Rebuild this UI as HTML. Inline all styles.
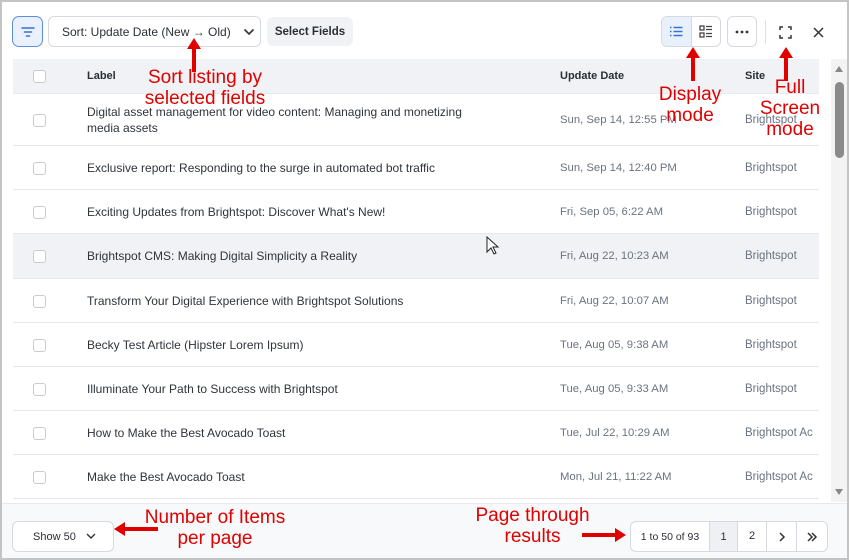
<!DOCTYPE html>
<html><head><style>
*{box-sizing:border-box;margin:0;padding:0}
body{width:849px;height:560px;overflow:hidden;background:#c4c4c4;font-family:"Liberation Sans",sans-serif;position:relative}
.win{position:absolute;left:2px;top:2px;width:845px;height:556px;background:#fff;overflow:hidden}
.btn{position:absolute;border:1px solid #d6dae0;border-radius:6px;background:#fff;font-size:12px;color:#2a2f36;display:flex;align-items:center;justify-content:center}
.tbl{position:absolute;left:11px;top:57px;width:806px}
.row{position:relative;border-bottom:1px solid #e6e8eb;height:44px;font-size:12px;color:#2f343b}
.row .cb{position:absolute;left:20px;top:50%;margin-top:-6px;width:13px;height:13px;border:1px solid #c8ccd2;border-radius:3px;background:#fff}
.row .l{position:absolute;left:74px;top:50%;transform:translateY(-50%);width:400px;line-height:16px}
.row .d{position:absolute;left:547px;top:50%;transform:translateY(-50%);color:#6b7280;font-size:11.3px}
.row .s{position:absolute;left:732px;top:50%;transform:translateY(-50%);color:#6b7280;white-space:nowrap;width:74px;overflow:hidden;font-size:11.5px}
.hd{background:#f0f2f5;height:35px;font-size:11px;color:#2a2f36;font-weight:bold}
.ann{position:absolute;color:#e00000;font-size:19px;text-align:center;line-height:21px}
</style></head><body>
<div class="win">
<div class="btn" style="left:10px;top:14px;width:31px;height:31px;border-color:#5b8de0;background:#eaf1fd;border-radius:7px">
<svg width="14" height="12"><path d="M1 2h12M3.5 6h7M5.5 10h3" stroke="#3b6fd0" stroke-width="1.6" stroke-linecap="round"/></svg></div>
<div class="btn" style="left:46px;top:14px;width:213px;height:31px;justify-content:flex-start;padding-left:13px">Sort: Update Date (New → Old)<svg style="margin-left:12px" width="12" height="8"><path d="M1.5 1.5l4.5 4.5 4.5-4.5" stroke="#333" stroke-width="1.6" fill="none"/></svg></div>
<div class="btn" style="left:265px;top:15px;width:86px;height:29px;border:none;background:#f0f2f5;font-weight:bold;font-size:11.5px">Select Fields</div>
<div class="btn" style="left:659px;top:14px;width:60px;height:31px;overflow:hidden">
<div style="width:30px;height:31px;background:#e8f0fc;border-right:1px solid #d6dae0;display:flex;align-items:center;justify-content:center"><svg width="14" height="11"><path d="M1 1.5h1.5M1 5.5h1.5M1 9.5h1.5M4.5 1.5h9M4.5 5.5h9M4.5 9.5h9" stroke="#3b6fd0" stroke-width="1.5"/></svg></div>
<div style="width:29px;display:flex;justify-content:center"><svg width="14" height="13"><rect x="1" y="1" width="4" height="4" fill="none" stroke="#444" stroke-width="1.3"/><rect x="1" y="8" width="4" height="4" fill="none" stroke="#444" stroke-width="1.3"/><path d="M7 1.5h6M7 4.5h6M7 8.5h6M7 11.5h6" stroke="#444" stroke-width="1.3"/></svg></div></div>
<div class="btn" style="left:725px;top:14px;width:30px;height:31px"><svg width="14" height="4"><circle cx="2" cy="2" r="1.4" fill="#333"/><circle cx="7" cy="2" r="1.4" fill="#333"/><circle cx="12" cy="2" r="1.4" fill="#333"/></svg></div>
<div style="position:absolute;left:763px;top:18px;width:1px;height:24px;background:#e0e3e7"></div>
<div class="btn" style="left:769px;top:16px;width:28px;height:28px;border:none"><svg width="13" height="13"><path d="M1 4V1h3M9 1h3v3M12 9v3H9M4 12H1V9" stroke="#333" stroke-width="1.5" fill="none"/></svg></div>
<div class="btn" style="left:802px;top:16px;width:28px;height:28px;border:none"><svg width="11" height="11"><path d="M1 1l9 9M10 1l-9 9" stroke="#333" stroke-width="1.5"/></svg></div>

<div class="tbl">
<div class="row hd"><div class="cb" style="top:17px"></div><div class="l" style="top:17px">Label</div><div class="d" style="color:#2a2f36;top:17px;font-size:11px">Update Date</div><div class="s" style="color:#2a2f36;top:17px;font-size:11px">Site</div></div>
<div class="row" style="height:52px"><div class="cb"></div><div class="l">Digital asset management for video content: Managing and monetizing media assets</div><div class="d">Sun, Sep 14, 12:55 PM</div><div class="s">Brightspot</div></div>
<div class="row"><div class="cb"></div><div class="l">Exclusive report: Responding to the surge in automated bot traffic</div><div class="d">Sun, Sep 14, 12:40 PM</div><div class="s">Brightspot</div></div>
<div class="row"><div class="cb"></div><div class="l">Exciting Updates from Brightspot: Discover What's New!</div><div class="d">Fri, Sep 05, 6:22 AM</div><div class="s">Brightspot</div></div>
<div class="row" style="background:#f0f2f5;height:45px"><div class="cb"></div><div class="l">Brightspot CMS: Making Digital Simplicity a Reality</div><div class="d">Fri, Aug 22, 10:23 AM</div><div class="s">Brightspot</div></div>
<div class="row"><div class="cb"></div><div class="l">Transform Your Digital Experience with Brightspot Solutions</div><div class="d">Fri, Aug 22, 10:07 AM</div><div class="s">Brightspot</div></div>
<div class="row"><div class="cb"></div><div class="l">Becky Test Article (Hipster Lorem Ipsum)</div><div class="d">Tue, Aug 05, 9:38 AM</div><div class="s">Brightspot</div></div>
<div class="row"><div class="cb"></div><div class="l">Illuminate Your Path to Success with Brightspot</div><div class="d">Tue, Aug 05, 9:33 AM</div><div class="s">Brightspot</div></div>
<div class="row"><div class="cb"></div><div class="l">How to Make the Best Avocado Toast</div><div class="d">Tue, Jul 22, 10:29 AM</div><div class="s">Brightspot Ac</div></div>
<div class="row"><div class="cb"></div><div class="l">Make the Best Avocado Toast</div><div class="d">Mon, Jul 21, 11:22 AM</div><div class="s">Brightspot Ac</div></div>
</div>
<div style="position:absolute;left:829px;top:57px;width:16px;height:443px;background:#f3f3f3"></div>
<div style="position:absolute;left:833px;top:64px;width:0;height:0;border-left:4px solid transparent;border-right:4px solid transparent;border-bottom:6px solid #888"></div>
<div style="position:absolute;left:833px;top:80px;width:9px;height:76px;background:#8a8a8a;border-radius:5px"></div>
<div style="position:absolute;left:833px;top:487px;width:0;height:0;border-left:4px solid transparent;border-right:4px solid transparent;border-top:6px solid #888"></div>

<div style="position:absolute;left:0;top:501px;width:845px;height:55px;background:#f8f9fa;border-top:1px solid #e6e8eb"></div>
<div class="btn" style="left:10px;top:519px;width:102px;height:31px;font-size:11px;justify-content:flex-start;padding-left:20px">Show 50<svg style="margin-left:10px" width="10" height="7"><path d="M1 1l4 4 4-4" stroke="#333" stroke-width="1.4" fill="none"/></svg></div>
<div class="btn" style="left:628px;top:519px;width:198px;height:31px;justify-content:flex-start;font-size:11px;overflow:hidden">
<div style="width:78px;text-align:center;font-size:10.5px">1 to 50 of 93</div>
<div style="width:29px;height:31px;background:#eef0f3;border-left:1px solid #d6dae0;border-right:1px solid #d6dae0;display:flex;align-items:center;justify-content:center">1</div>
<div style="width:29px;text-align:center;border-right:1px solid #d6dae0;line-height:31px">2</div>
<div style="width:30px;height:31px;border-right:1px solid #d6dae0;display:flex;align-items:center;justify-content:center"><svg width="8" height="10"><path d="M2 1l4 4-4 4" stroke="#333" stroke-width="1.5" fill="none"/></svg></div>
<div style="width:30px;height:31px;display:flex;align-items:center;justify-content:center"><svg width="12" height="10"><path d="M2 1l4 4-4 4M6 1l4 4-4 4" stroke="#333" stroke-width="1.5" fill="none"/></svg></div></div>
</div>

<div class="ann" style="left:125px;top:67px;width:160px">Sort listing by<br>selected fields</div>
<svg style="position:absolute;left:186px;top:36px" width="16" height="36"><path d="M8 36V8" stroke="#e00000" stroke-width="4"/><path d="M1 13L8 2l7 11z" fill="#e00000"/></svg>
<div class="ann" style="left:648px;top:84px;width:84px">Display<br>mode</div>
<svg style="position:absolute;left:685px;top:45px" width="16" height="36"><path d="M8 36V8" stroke="#e00000" stroke-width="4"/><path d="M1 13L8 2l7 11z" fill="#e00000"/></svg>
<div class="ann" style="left:748px;top:77px;width:84px">Full<br>Screen<br>mode</div>
<svg style="position:absolute;left:778px;top:45px" width="16" height="36"><path d="M8 36V8" stroke="#e00000" stroke-width="4"/><path d="M1 13L8 2l7 11z" fill="#e00000"/></svg>
<div class="ann" style="left:130px;top:507px;width:170px">Number of Items<br>per page</div>
<svg style="position:absolute;left:112px;top:521px" width="46" height="16"><path d="M46 8H8" stroke="#e00000" stroke-width="4"/><path d="M13 1L2 8l11 7z" fill="#e00000"/></svg>
<div class="ann" style="left:460px;top:505px;width:145px">Page through<br>results</div>
<svg style="position:absolute;left:582px;top:527px" width="46" height="16"><path d="M0 8h36" stroke="#e00000" stroke-width="4"/><path d="M33 1l11 7-11 7z" fill="#e00000"/></svg>
<svg style="position:absolute;left:486px;top:236px" width="14" height="20"><path d="M1 1v15l4-4 3 6 2-1-3-6h5z" fill="#fff" stroke="#222" stroke-width="1"/></svg>
</body></html>
